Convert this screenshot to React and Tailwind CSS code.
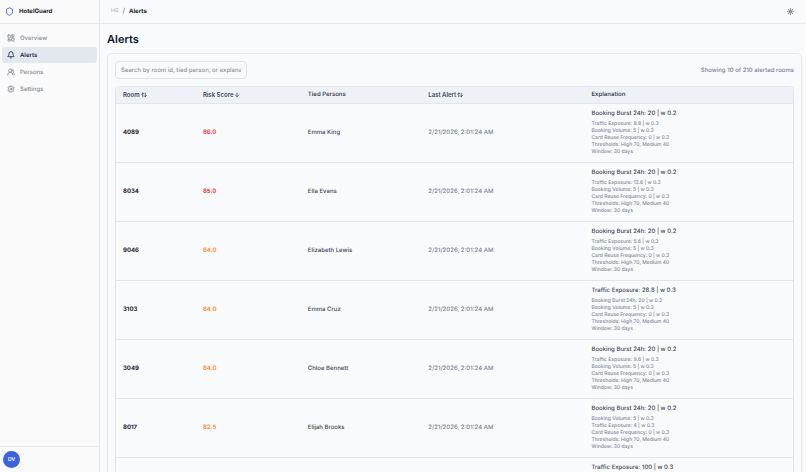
import { ArrowDown, Bell, LayoutDashboard, Settings, Shield, Sun, UsersRound } from "lucide-react";

const navItems = [
  { label: "Overview", icon: LayoutDashboard },
  { label: "Alerts", icon: Bell, active: true },
  { label: "Persons", icon: UsersRound },
  { label: "Settings", icon: Settings },
];

const burst = "Booking Burst 24h: 20 | w 0.2";
const volume = "Booking Volume: 5 | w 0.3";
const common = ["Card Reuse Frequency: 0 | w 0.3", "Thresholds: High 70, Medium 40", "Window: 30 days"];
const alertTime = "2/21/2026, 2:01:24 AM";

const rows = [
  { room: "4089", score: "86.0", high: true, person: "Emma King", time: alertTime, title: burst, details: ["Traffic Exposure: 8.8 | w 0.3", volume, ...common] },
  { room: "8034", score: "85.0", high: true, person: "Ella Evans", time: alertTime, title: burst, details: ["Traffic Exposure: 13.6 | w 0.3", volume, ...common] },
  { room: "9046", score: "84.0", person: "Elizabeth Lewis", time: alertTime, title: burst, details: ["Traffic Exposure: 5.6 | w 0.3", volume, ...common] },
  { room: "3103", score: "84.0", person: "Emma Cruz", time: alertTime, title: "Traffic Exposure: 28.8 | w 0.3", details: ["Booking Burst 24h: 20 | w 0.2", volume, ...common] },
  { room: "3049", score: "84.0", person: "Chloe Bennett", time: alertTime, title: burst, details: ["Traffic Exposure: 9.6 | w 0.3", volume, ...common] },
  { room: "8017", score: "82.5", person: "Elijah Brooks", time: alertTime, title: burst, details: [volume, "Traffic Exposure: 4 | w 0.3", ...common] },
  { title: "Traffic Exposure: 100 | w 0.3", details: [] },
];

function SortIcon() {
  return (
    <svg viewBox="0 0 12 12" className="size-[6px]" fill="none" stroke="currentColor" strokeWidth="1.6" strokeLinecap="round" strokeLinejoin="round" aria-hidden="true">
      <path d="M3.5 9.500V2M1 4.500l2.500-2.500L5 3.500M8.500 2v7.500M7 8l1.500 1.500L11 7" />
    </svg>
  );
}

function Sidebar() {
  return (
    <aside className="flex w-[100px] shrink-0 flex-col border-r border-[#e4e7ec] bg-[#fafafa]">
      <div className="flex h-6 items-center gap-[5px] border-b border-[#e4e7ec] px-[5px]">
        <Shield className="size-[9px] text-[#3b62e0]" strokeWidth={2.4} />
        <span className="text-[6px] font-bold text-[#1e2433]">HotelGuard</span>
      </div>
      <nav className="flex flex-col gap-px px-[2px] pt-[6px]">
        {navItems.map(({ label, icon: Icon, active }) => (
          <a
            key={label}
            href="#"
            className={
              active
                ? "flex h-4 items-center gap-[5px] rounded-[3px] bg-[#e2e8f0] px-[5px] text-[6px] font-semibold text-[#1e293b]"
                : "flex h-4 items-center gap-[5px] rounded-[3px] px-[5px] text-[6px] font-medium text-[#868c98]"
            }
          >
            <Icon className="size-[8px]" strokeWidth={2.6} />
            {label}
          </a>
        ))}
      </nav>
      <div className="mt-auto flex h-[26px] items-center border-t border-[#e4e7ec] px-[3px]">
        <button type="button" className="flex size-[17px] items-center justify-center rounded-full bg-[#3b62e0] text-[5px] font-semibold text-white">
          DV
        </button>
      </div>
    </aside>
  );
}

function AlertsTable() {
  return (
    <div className="overflow-hidden rounded-[4px] border border-[#e2e6ec]">
      <table className="w-full table-fixed border-collapse text-left text-[6px]">
        <colgroup>
          <col className="w-[11.8%]" />
          <col className="w-[15.5%]" />
          <col className="w-[17.8%]" />
          <col className="w-[24.1%]" />
          <col className="w-[30.8%]" />
        </colgroup>
        <thead>
          <tr className="h-4 border-b border-[#e2e6ec] bg-[#eef1f6] text-[#3f4859]">
            <th className="px-[7px] py-0 font-semibold">
              <button type="button" className="flex items-center gap-px">Room <SortIcon /></button>
            </th>
            <th className="px-[7px] py-0 font-semibold">
              <button type="button" className="flex items-center gap-px">Risk Score <ArrowDown className="size-[6px]" strokeWidth={3} /></button>
            </th>
            <th className="px-[7px] py-0 font-semibold">Tied Persons</th>
            <th className="px-[7px] py-0 font-semibold">
              <button type="button" className="flex items-center gap-px">Last Alert <SortIcon /></button>
            </th>
            <th className="px-[7px] py-0 font-semibold">Explanation</th>
          </tr>
        </thead>
        <tbody>
          {rows.map((row, i) => (
            <tr key={i} className="h-[59px] border-b border-[#e2e6ec] text-[#3f4859]">
              <td className="px-[7px] py-0 font-bold text-[#1e2433]">{row.room}</td>
              <td className={row.high ? "px-[7px] py-0 font-bold text-[#ef4444]" : "px-[7px] py-0 font-bold text-[#fb923c]"}>{row.score}</td>
              <td className="px-[7px] py-0 font-medium">{row.person}</td>
              <td className="px-[7px] py-0 font-medium text-[#788294]">{row.time}</td>
              <td className="px-[7px] py-0 align-top">
                <p className="mt-[5px] leading-[10px] font-medium">{row.title}</p>
                <ul className="mt-[2px] text-[5px] leading-[7px] font-medium text-[#7f899a]">
                  {row.details.map((detail) => (
                    <li key={detail}>{detail}</li>
                  ))}
                </ul>
              </td>
            </tr>
          ))}
        </tbody>
      </table>
    </div>
  );
}

export default function App() {
  return (
    <div className="flex h-screen overflow-hidden bg-[#f9fafc] font-['Inter',sans-serif] [text-rendering:geometricPrecision]">
      <Sidebar />
      <div className="flex min-w-0 flex-1 flex-col">
        <header className="flex h-6 shrink-0 items-center justify-between border-b border-[#e4e7ec] pr-3 pl-[11px]">
          <nav aria-label="Breadcrumb" className="flex items-center gap-1 text-[6px]">
            <a href="#" className="text-[5px] text-[#9aa1ad]">HG</a>
            <span className="text-[7px] text-[#60697a]">/</span>
            <span className="font-bold text-[#1e2433]">Alerts</span>
          </nav>
          <button type="button" aria-label="Toggle theme" className="text-[#8a909b]">
            <Sun className="size-[7px]" fill="currentColor" strokeWidth={4} />
          </button>
        </header>
        <main className="min-h-0 flex-1 overflow-y-auto pt-2 pr-1 pl-[7px] [scrollbar-width:none]">
          <h1 className="text-[11px] leading-[14px] font-semibold text-[#0f172a]">Alerts</h1>
          <section className="mt-[7px] rounded-[5px] border border-[#e4e7ec] p-[7px]">
            <div className="mb-[7px] flex items-center justify-between">
              <input
                type="text"
                aria-label="Search alerts"
                placeholder="Search by room id, tied person, or explanation"
                className="h-[18px] w-[132px] rounded-[4px] border border-[#e0e4ea] bg-transparent px-[5px] text-[6px] font-medium text-[#3f4859] [text-rendering:geometricPrecision] placeholder:text-[#8a93a2]"
              />
              <p className="text-[6px] font-medium text-[#788294]">Showing 10 of 210 alerted rooms</p>
            </div>
            <AlertsTable />
          </section>
        </main>
      </div>
    </div>
  );
}
